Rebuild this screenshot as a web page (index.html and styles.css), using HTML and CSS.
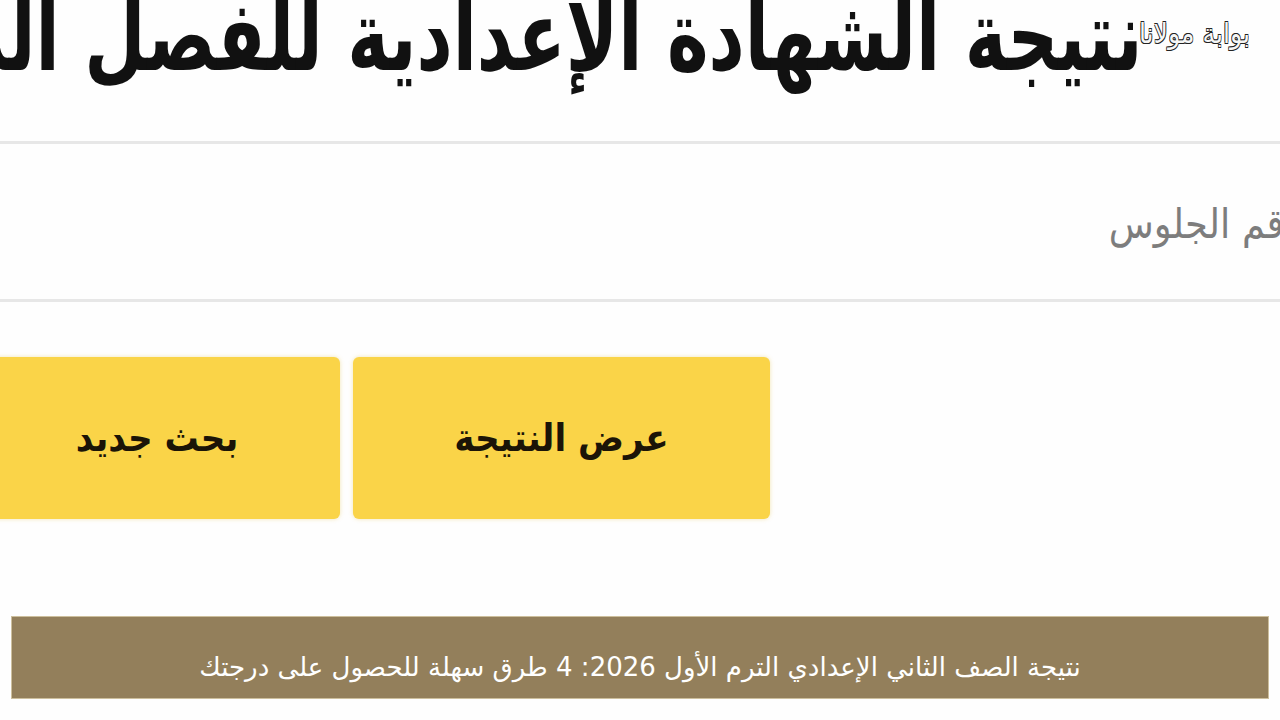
FILE: index.html
```html
<!DOCTYPE html>
<html lang="ar" dir="rtl">
<head>
<meta charset="utf-8">
<title>نتيجة الصف الثاني الإعدادي</title>
<link rel="stylesheet" href="styles.css">
</head>
<body>
<div class="frame">
  <div class="photo">
    <div class="title-row">
      <h1 class="title">نتيجة الشهادة الإعدادية للفصل الدراسي الأول</h1>
    </div>
    <div class="field-row">
      <span class="placeholder">رقم الجلوس</span>
    </div>
    <div class="btn-row">
      <div class="btn">عرض النتيجة</div>
      <div class="btn btn-second">بحث جديد</div>
    </div>
  </div>
  <div class="logo">بوابة مولانا</div>
  <div class="caption">نتيجة الصف الثاني الإعدادي الترم الأول 2026: 4 طرق سهلة للحصول على درجتك</div>
</div>
</body>
</html>
```

FILE: styles.css
```css
html, body {
  margin: 0;
  padding: 0;
  background: #ffffff;
}
.frame {
  position: relative;
  width: 1280px;
  height: 720px;
  overflow: hidden;
  background: #fefefe;
  font-family: "DejaVu Sans Condensed", "DejaVu Sans", sans-serif;
}
.photo {
  display: flex;
  flex-direction: column;
  width: 1280px;
}
.title-row {
  height: 141px;
  border-bottom: 3px solid #e7e7e7;
  padding-right: 138px;
  overflow: hidden;
  display: flex;
}
.title {
  margin: -22px 0 0 0;
  font-size: 98px;
  font-weight: bold;
  color: #111111;
  white-space: nowrap;
  line-height: 1.2;
  transform: scaleX(0.8);
  transform-origin: right center;
}
.field-row {
  height: 155px;
  border-bottom: 3px solid #e7e7e7;
  display: flex;
  align-items: center;
  margin-right: -22px;
}
.placeholder {
  font-size: 41px;
  color: #7d7d7d;
  white-space: nowrap;
  margin-top: 4px;
}
.btn-row {
  display: flex;
  gap: 13px;
  padding-top: 55px;
  padding-right: 510px;
}
.btn {
  flex: 0 0 417px;
  height: 162px;
  border-radius: 6px;
  background: #fad448;
  box-shadow: 0 0 4px rgba(220, 180, 40, 0.35);
  display: flex;
  align-items: center;
  justify-content: center;
  font-size: 38px;
  font-weight: bold;
  color: #1b1407;
  letter-spacing: -1px;
}
.btn-second {
  flex-basis: 366px;
}
.logo {
  position: absolute;
  top: 17px;
  right: 30px;
  font-size: 28px;
  color: #f6f6f6;
  text-shadow: 0.6px 0.6px 0 #222, -0.6px -0.6px 0 #222, 0.6px -0.6px 0 #222, -0.6px 0.6px 0 #222;
  white-space: nowrap;
  letter-spacing: -0.5px;
}
.caption {
  position: absolute;
  left: 11px;
  top: 616px;
  width: 1258px;
  height: 83px;
  box-sizing: border-box;
  background: #937f5b;
  border: 1px solid #cdbf9d;
  color: #ffffff;
  font-family: "DejaVu Sans", sans-serif;
  font-size: 26px;
  display: flex;
  align-items: center;
  justify-content: center;
  padding-top: 18px;
}
```
